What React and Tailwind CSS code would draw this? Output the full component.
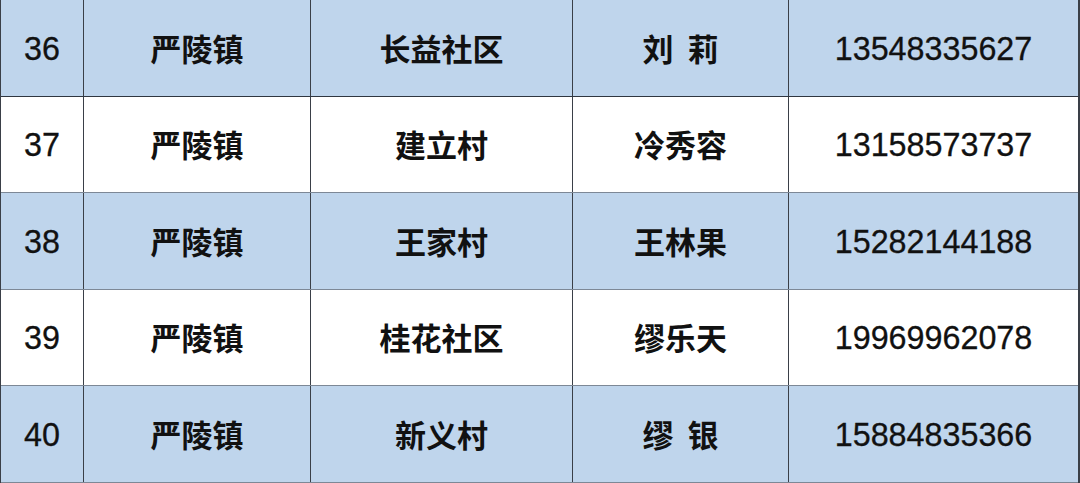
import React from "react";

const rows = [
  ["36", "严陵镇", "长益社区", "刘  莉", "13548335627", true],
  ["37", "严陵镇", "建立村", "冷秀容", "13158573737", false],
  ["38", "严陵镇", "王家村", "王林果", "15282144188", true],
  ["39", "严陵镇", "桂花社区", "缪乐天", "19969962078", false],
  ["40", "严陵镇", "新义村", "缪  银", "15884835366", true],
];

const numCls = "font-['Liberation_Sans',Arial,sans-serif] text-[32.3px] text-[#111] [-webkit-text-stroke:0.3px_#111]";
const cjkCls = "font-['Noto_Sans_CJK_SC','Noto_Sans',sans-serif] text-[31px] font-bold text-[#111] whitespace-pre";

export default function App() {
  return (
    <div className="w-[1080px] h-[483px] bg-white overflow-hidden">
      <div className="flex flex-col h-[483px] border-l border-r-2 border-[#3a3f47] w-[1080px]">
        {rows.map((r, i) => (
          <div
            key={i}
            className={`flex flex-1 border-b ${i === 0 ? "border-[#2f3640]" : "border-[#7d8896]"} ${r[5] ? "bg-[#bfd5ec]" : "bg-white"}`}
          >
            <div className={`w-[83px] flex items-center justify-center border-r border-[#3a3f47] pt-[2px] ${numCls}`}>
              {r[0]}
            </div>
            <div className={`w-[227px] flex items-center justify-center border-r border-[#3a3f47] ${cjkCls}`}>
              {r[1]}
            </div>
            <div className={`w-[262px] flex items-center justify-center border-r border-[#3a3f47] ${cjkCls}`}>
              {r[2]}
            </div>
            <div className={`w-[216px] flex items-center justify-center border-r border-[#3a3f47] ${cjkCls}`}>
              {r[3]}
            </div>
            <div className={`flex-1 flex items-center justify-center pt-[2px] ${numCls}`}>
              {r[4]}
            </div>
          </div>
        ))}
      </div>
    </div>
  );
}
